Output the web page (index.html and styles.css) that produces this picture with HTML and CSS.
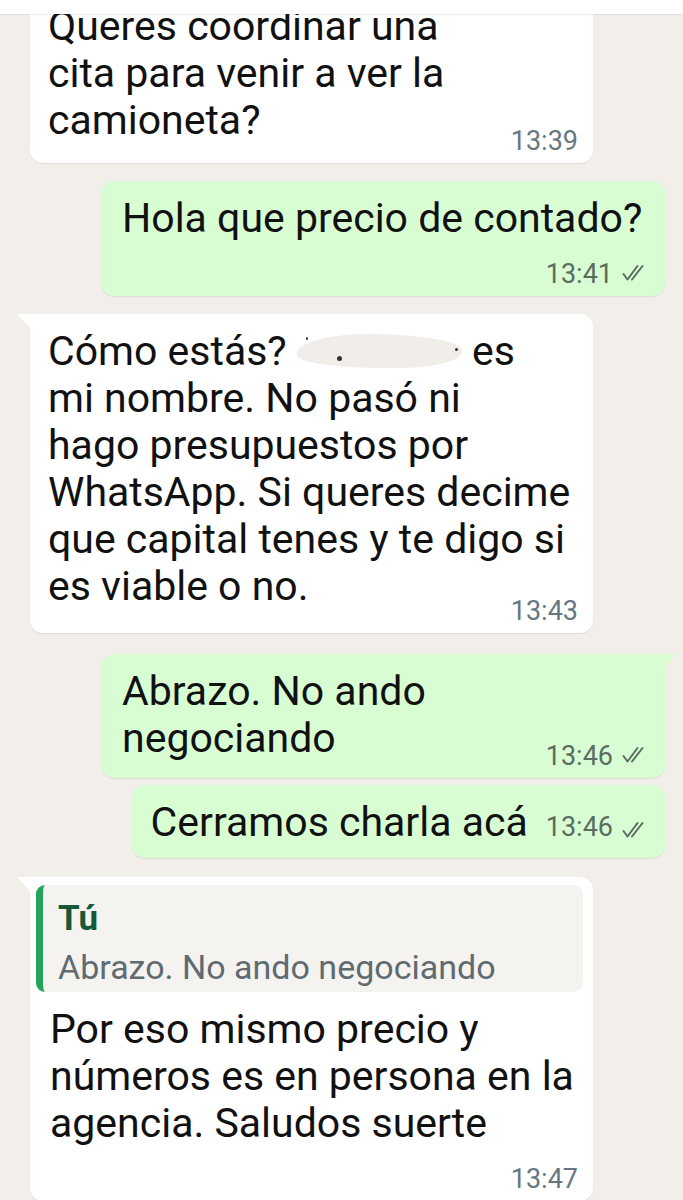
FILE: index.html
```html
<!DOCTYPE html>
<html lang="es">
<head>
<meta charset="utf-8">
<title>Chat</title>
<link rel="stylesheet" href="styles.css">
</head>
<body>
<div class="topbar"></div>
<main class="chat">
  <div class="bubble in cut">
    <div class="text">Queres coordinar una<br>cita para venir a ver la<br>camioneta?</div>
    <div class="meta m1"><span class="time">13:39</span></div>
  </div>

  <div class="bubble out b2">
    <div class="text">Hola que precio de contado?</div>
    <div class="meta m2"><span class="time">13:41</span>
      <svg class="ticks" viewBox="0 0 26 18" width="26" height="18"><path d="M1.5 10 L5.5 15.5 L15.5 2" /><path d="M10 15.5 L20.5 2" /></svg>
    </div>
  </div>

  <div class="bubble in tail-in b3">
    <div class="text">Cómo estás? <span class="redact"><i class="speck s1"></i><i class="speck s2"></i><i class="speck s3"></i></span> es<br>mi nombre. No pasó ni<br>hago presupuestos por<br>WhatsApp. Si queres decime<br>que capital tenes y te digo si<br>es viable o no.</div>
    <div class="meta m3"><span class="time">13:43</span></div>
  </div>

  <div class="bubble out tail-out b4">
    <div class="text">Abrazo. No ando<br>negociando</div>
    <div class="meta m4"><span class="time">13:46</span>
      <svg class="ticks" viewBox="0 0 26 18" width="26" height="18"><path d="M1.5 10 L5.5 15.5 L15.5 2" /><path d="M10 15.5 L20.5 2" /></svg>
    </div>
  </div>

  <div class="bubble out inline b5">
    <div class="text">Cerramos charla acá</div>
    <div class="meta m5"><span class="time">13:46</span>
      <svg class="ticks" viewBox="0 0 26 18" width="26" height="18"><path d="M1.5 10 L5.5 15.5 L15.5 2" /><path d="M10 15.5 L20.5 2" /></svg>
    </div>
  </div>

  <div class="bubble in tail-in b6">
    <div class="quote">
      <div class="quote-name">Tú</div>
      <div class="quote-text">Abrazo. No ando negociando</div>
    </div>
    <div class="text">Por eso mismo precio y<br>números es en persona en la<br>agencia. Saludos suerte</div>
    <div class="meta m6"><span class="time">13:47</span></div>
  </div>
</main>
</body>
</html>
```

FILE: styles.css
```css
* { box-sizing: border-box; }

html, body {
  margin: 0;
  padding: 0;
  height: 1200px;
  overflow: hidden;
  background: #f2efea;
  font-family: Roboto, "Noto Sans", "Liberation Sans", sans-serif;
  color: #111;
}

.topbar {
  position: absolute;
  top: 0;
  left: 0;
  right: 0;
  height: 14px;
  background: #ffffff;
  box-shadow: 0 1px 1px rgba(0, 0, 0, 0.06);
  z-index: 2;
}

.chat {
  display: flex;
  flex-direction: column;
  padding: 0;
}

.bubble {
  position: relative;
  border-radius: 13px;
  padding: 14px 15px 9px 18px;
  box-shadow: 0 1px 1px rgba(0, 0, 0, 0.08);
}

.bubble.in {
  align-self: flex-start;
  margin-left: 30px;
  width: 563px;
  background: #ffffff;
}

.bubble.out {
  align-self: flex-end;
  margin-right: 18px;
  width: 564px;
  background: #d9fdd3;
  padding-left: 21px;
  padding-right: 17px;
}

.text {
  font-size: 41px;
  line-height: 47px;
  white-space: nowrap;
}

.meta {
  display: flex;
  justify-content: flex-end;
  align-items: center;
  gap: 9px;
  height: 26px;
}

.time {
  font-size: 27px;
  line-height: 26px;
  color: #667781;
}

.out .time { color: #5b6d60; }

.ticks {
  fill: none;
  stroke: #5b6d60;
  stroke-width: 2;
  stroke-linecap: round;
  stroke-linejoin: round;
  margin-top: -2px;
}

/* individual bubbles */
.cut { margin-top: -11px; }
.m1 { margin-top: -16px; }

.b2 { margin-top: 18px; }
.m2 { margin-top: 19px; }

.b3 { margin-top: 18px; }
.m3 { margin-top: -12px; }

.b4 { margin-top: 21px; }
.m4 { margin-top: -19px; }

.bubble.b5 {
  margin-top: 7px;
  width: auto;
  display: flex;
  align-items: baseline;
  gap: 18px;
  padding-left: 19px;
  padding-bottom: 12px;
}
.b5 .meta { height: auto; align-items: baseline; }
.b5 .ticks { align-self: center; margin-top: 6px; }

.bubble.b6 {
  margin-top: 19px;
  padding: 8px 10px 9px 6px;
}
.b6 .text { margin: 14px 0 0 14px; }
.m6 { margin-top: 19px; margin-right: 5px; }

/* tails */
.tail-in { border-top-left-radius: 0; }
.tail-in::before {
  content: "";
  position: absolute;
  top: 0;
  left: -13px;
  width: 14px;
  height: 15px;
  background: #ffffff;
  clip-path: polygon(0 0, 100% 0, 100% 100%);
}

.tail-out { border-top-right-radius: 0; }
.tail-out::before {
  content: "";
  position: absolute;
  top: 0;
  right: -12px;
  width: 13px;
  height: 14px;
  background: #d9fdd3;
  clip-path: polygon(0 0, 100% 0, 0 100%);
}

/* quote */
.quote {
  background: #f5f3f0;
  border-radius: 9px;
  border-left: 7px solid #25a35a;
  padding: 13px 12px 3px 15px;
}

.quote-name {
  font-size: 35px;
  line-height: 42px;
  font-weight: 700;
  color: #17573a;
}

.quote-text {
  margin-top: 5px;
  font-size: 34px;
  line-height: 44px;
  color: #5f6b70;
}

/* redacted blur */
.redact {
  position: relative;
  display: inline-block;
  width: 165px;
  height: 34px;
  vertical-align: -3px;
  background: #f1eee9;
  border-radius: 45% 60% 40% 55% / 60% 50% 50% 40%;
}

.speck {
  position: absolute;
  background: #333;
  border-radius: 50%;
}
.s1 { left: 9px; top: 3px; width: 2px; height: 3px; }
.s2 { left: 40px; top: 22px; width: 5px; height: 5px; }
.s3 { right: 4px; top: 14px; width: 3px; height: 3px; }
```
